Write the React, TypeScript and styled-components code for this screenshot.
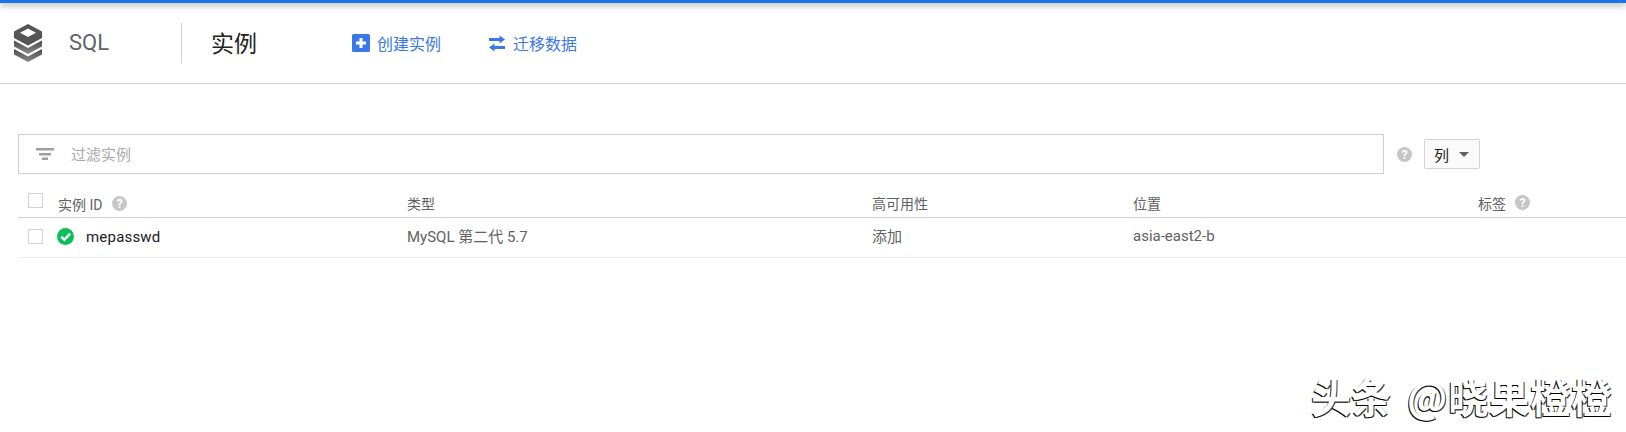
import React from "react";
import styled, { createGlobalStyle } from "styled-components";

const Global = createGlobalStyle`
  html, body { margin: 0; padding: 0; background: #fff; }
  body { font-family: Roboto, "Noto Sans CJK SC", sans-serif; width: 1626px; height: 432px; overflow: hidden; }
`;
const Page = styled.div`position: relative; width: 1626px; height: 432px; overflow: hidden;`;
const BlueBar = styled.div`height: 3px; background: #1a73e8; box-shadow: 0 2px 6px rgba(0,0,0,.45);`;
const Header = styled.header`
  display: flex; align-items: center; height: 81px; box-sizing: border-box;
  border-bottom: 1px solid #d0d0d0; padding-left: 14px;
`;
const Logo = styled.svg`width: 28px; height: 38px; flex: none; margin-top: -1px;`;
const Product = styled.div`font-size: 22px; color: #5f6368; margin-left: 27px; width: 112px; position: relative; top: -1px;`;
const Divider = styled.div`width: 1px; height: 40px; background: #d0d0d0;`;
const Title = styled.h1`
  margin: 0 0 0 29px; width: 141px; font-size: 23px; font-weight: 400; color: #212121;
  font-family: "Noto Sans CJK SC", sans-serif; position: relative; top: -1px;
`;
const Action = styled.a`
  display: flex; align-items: center; gap: 7px; color: #3b78e7; font-size: 16px;
  font-family: "Noto Sans CJK SC", sans-serif; margin-right: 47px;
  svg { flex: none; }
`;
const Content = styled.main`padding: 50px 0 0 18px;`;
const FilterRow = styled.div`display: flex; align-items: center;`;
const FilterBox = styled.div`
  width: 1366px; height: 40px; box-sizing: border-box; border: 1px solid #cfcfcf;
  display: flex; align-items: center; padding-left: 17px; gap: 17px;
`;
const FilterText = styled.span`font-size: 15px; color: #a8a8a8; font-family: "Noto Sans CJK SC", sans-serif; position: relative; top: -1px;`;
const HelpWrap = styled.span<{ $ml: number }>`display: inline-flex; margin-left: ${p => p.$ml}px;`;
const ColumnsBtn = styled.button`
  margin-left: 12px; width: 56px; height: 30px; box-sizing: border-box; border: 1px solid #d4d4d4;
  border-radius: 2px; background: #fafafa; display: flex; align-items: center; padding: 0 0 0 9px; gap: 10px;
  font-size: 15px; color: #212121; font-family: "Noto Sans CJK SC", sans-serif;
`;
const Caret = styled.span`width: 0; height: 0; border-left: 5px solid transparent; border-right: 5px solid transparent; border-top: 5px solid #616161;`;
const Row = styled.div<{ $head?: boolean }>`
  display: grid; grid-template-columns: 389px 465px 261px 345px 1fr; align-items: center;
  box-sizing: border-box; height: ${p => (p.$head ? 36 : 40)}px;
  margin-top: ${p => (p.$head ? 8 : 0)}px;
  border-bottom: 1px solid ${p => (p.$head ? "#d0d0d0" : "#eeeeee")};
  font-size: 15px; color: #616161;
  font-family: Roboto, "Noto Sans CJK SC", sans-serif;
`;
const First = styled.div`display: flex; align-items: center; padding-left: 10px;`;
const Check = styled.span<{ $up?: boolean }>`
  width: 15px; height: 15px; box-sizing: border-box; border: 1px solid #d2d2d2; flex: none;
  margin-top: ${p => (p.$up ? 2 : 0)}px;
  margin-bottom: ${p => (p.$up ? 0 : 2)}px;
`;
const HeadLabel = styled.span`display: inline-flex; align-items: center; gap: 9px; font-size: 14px; position: relative; top: 3px;`;
const FirstLabel = styled(HeadLabel)`margin-left: 15px; gap: 10px; top: 4px;`;
const Name = styled.span`color: #212121; font-size: 15px; margin-left: 12px; letter-spacing: .2px; position: relative; top: -1px;`;
const Status = styled.svg`margin-left: 14px; flex: none; position: relative; top: -1px;`;
const Cell = styled.span`position: relative; top: -2px;`;
const Watermark = styled.div`
  position: absolute; left: 1311px; top: 368px; white-space: nowrap;
  font-family: "Noto Sans CJK SC", sans-serif; font-weight: 700; font-size: 40px; line-height: 56px;
  color: #fff; letter-spacing: 0;
  text-shadow: -1px 1px 0 #000, 1px 1px 0 #333;
`;
const Handle = styled.span`margin-left: 7px; letter-spacing: 1px;`;

const Help = () => (
  <svg width="15" height="15" viewBox="0 0 15 15">
    <circle cx="7.5" cy="7.5" r="7.5" fill="#c6c6c6" />
    <text x="7.5" y="12" textAnchor="middle" fontSize="12.5" fontWeight="700" fontFamily="Roboto" fill="#fff">?</text>
  </svg>
);

export default function App() {
  return (
    <Page>
      <Global />
      <BlueBar />
      <Header>
        <Logo viewBox="0 0 28 38">
          <defs>
            <linearGradient id="stackFade" x1="0" y1="0" x2="0" y2="1">
              <stop offset="0" stopColor="#4a4a4a" />
              <stop offset="1" stopColor="#8c8c8c" />
            </linearGradient>
          </defs>
          <path d="M14 0 L28 7.5 V14 L14 21.5 L0 14 V7.5 Z M14 4.5 L6 8.8 L14 13 L22 8.8 Z" fill="#555" fillRule="evenodd" />
          <path d="M0 16.5 L14 24 L28 16.5 V22.5 L14 30 L0 22.5 Z" fill="url(#stackFade)" />
          <path d="M0 25 L14 32.5 L28 25 V30.5 L14 38 L0 30.5 Z" fill="url(#stackFade)" />
        </Logo>
        <Product>SQL</Product>
        <Divider />
        <Title>实例</Title>
        <Action>
          <svg width="18" height="18" viewBox="0 0 18 18">
            <rect width="18" height="18" rx="1.5" fill="#3b78e7" />
            <path d="M7.5 4h3v3.5H14v3h-3.5V14h-3v-3.5H4v-3h3.5z" fill="#fff" />
          </svg>
          创建实例
        </Action>
        <Action>
          <svg width="18" height="17" viewBox="0 0 18 16">
            <path d="M11.5 0 L17 4 L11.5 8 V5.5 H1 V2.5 H11.5 Z M6.5 8 V10.5 H17 V13.5 H6.5 V16 L1 12 Z" fill="#3b78e7" />
          </svg>
          迁移数据
        </Action>
      </Header>
      <Content>
        <FilterRow>
          <FilterBox>
            <svg width="18" height="12" viewBox="0 0 18 12">
              <path d="M0 0h18v2.4H0zM3 5h12v2.4H3zM6 9.6h6V12H6z" fill="#9e9e9e" />
            </svg>
            <FilterText>过滤实例</FilterText>
          </FilterBox>
          <HelpWrap $ml={13}><Help /></HelpWrap>
          <ColumnsBtn>列<Caret /></ColumnsBtn>
        </FilterRow>
        <Row $head>
          <First>
            <Check $up />
            <FirstLabel>实例 ID <Help /></FirstLabel>
          </First>
          <HeadLabel>类型</HeadLabel>
          <HeadLabel>高可用性</HeadLabel>
          <HeadLabel>位置</HeadLabel>
          <HeadLabel>标签 <Help /></HeadLabel>
        </Row>
        <Row>
          <First>
            <Check />
            <Status width="17" height="17" viewBox="0 0 18 18">
              <circle cx="9" cy="9" r="9" fill="#0bbf5a" />
              <path d="M4.5 9.2 L7.8 12.5 L13.8 6" fill="none" stroke="#fff" strokeWidth="2.6" />
            </Status>
            <Name>mepasswd</Name>
          </First>
          <Cell>MySQL 第二代 5.7</Cell>
          <Cell>添加</Cell>
          <Cell>asia-east2-b</Cell>
          <span />
        </Row>
      </Content>
      <Watermark>头条 <Handle>@晓果橙橙</Handle></Watermark>
    </Page>
  );
}
